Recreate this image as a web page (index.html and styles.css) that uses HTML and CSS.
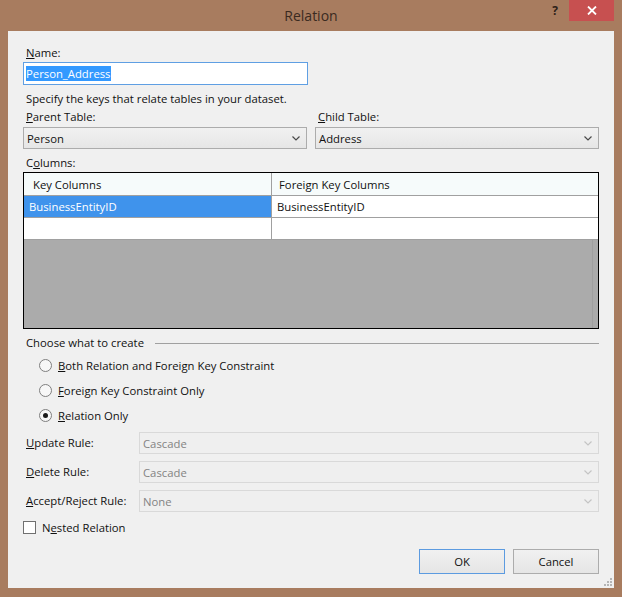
FILE: index.html
```html
<!DOCTYPE html>
<html>
<head>
<meta charset="utf-8">
<link rel="stylesheet" href="styles.css">
</head>
<body>
<div class="window">
  <div class="titlebar">
    <div></div>
    <div class="title">Relation</div>
    <div class="controls">
      <span class="help">?</span>
      <span class="close"><svg width="10" height="9" viewBox="0 0 10 9"><path d="M1 0.5 L9 8.5 M9 0.5 L1 8.5" stroke="#fff" stroke-width="1.8" fill="none"/></svg></span>
    </div>
  </div>
  <div class="client">
    <div class="label"><u>N</u>ame:</div>
    <div class="textbox"><span class="sel">Person_Address</span></div>
    <div class="label specify">Specify the keys that relate tables in your dataset.</div>
    <div class="tables">
      <div class="field">
        <div class="label"><u>P</u>arent Table:</div>
        <div class="combo"><span>Person</span><svg class="chev" width="8" height="5" viewBox="0 0 8 5"><path d="M0.5 0.5 L4 4 L7.5 0.5" stroke="#4a4a4a" stroke-width="1.2" fill="none"/></svg></div>
      </div>
      <div class="field">
        <div class="label"><u>C</u>hild Table:</div>
        <div class="combo"><span>Address</span><svg class="chev" width="8" height="5" viewBox="0 0 8 5"><path d="M0.5 0.5 L4 4 L7.5 0.5" stroke="#4a4a4a" stroke-width="1.2" fill="none"/></svg></div>
      </div>
    </div>
    <div class="label columns">C<u>o</u>lumns:</div>
    <div class="grid">
      <div class="row head"><div class="cell">Key Columns</div><div class="cell">Foreign Key Columns</div></div>
      <div class="row"><div class="cell selected">BusinessEntityID</div><div class="cell">BusinessEntityID</div></div>
      <div class="row"><div class="cell"></div><div class="cell"></div></div>
      <div class="empty"><div class="strip"></div></div>
    </div>
    <div class="group"><span>Choose what to create</span><div class="rule"></div></div>
    <div class="radios">
      <div class="radio"><span class="circle"></span><span><u>B</u>oth Relation and Foreign Key Constraint</span></div>
      <div class="radio"><span class="circle"></span><span><u>F</u>oreign Key Constraint Only</span></div>
      <div class="radio"><span class="circle checked"></span><span><u>R</u>elation Only</span></div>
    </div>
    <div class="rules">
      <div class="label"><u>U</u>pdate Rule:</div>
      <div class="combo disabled"><span>Cascade</span><svg class="chev" width="8" height="5" viewBox="0 0 8 5"><path d="M0.5 0.5 L4 4 L7.5 0.5" stroke="#c4c4c4" stroke-width="1.2" fill="none"/></svg></div>
      <div class="label"><u>D</u>elete Rule:</div>
      <div class="combo disabled"><span>Cascade</span><svg class="chev" width="8" height="5" viewBox="0 0 8 5"><path d="M0.5 0.5 L4 4 L7.5 0.5" stroke="#c4c4c4" stroke-width="1.2" fill="none"/></svg></div>
      <div class="label"><u>A</u>ccept/Reject Rule:</div>
      <div class="combo disabled"><span>None</span><svg class="chev" width="8" height="5" viewBox="0 0 8 5"><path d="M0.5 0.5 L4 4 L7.5 0.5" stroke="#c4c4c4" stroke-width="1.2" fill="none"/></svg></div>
    </div>
    <div class="check"><span class="box"></span><span>N<u>e</u>sted Relation</span></div>
    <div class="buttons">
      <div class="btn default">OK</div>
      <div class="btn">Cancel</div>
    </div>
    <svg class="grip" width="9" height="9" viewBox="0 0 9 9">
      <rect x="6" y="0" width="2" height="2" fill="#b5b5b5"/>
      <rect x="3" y="3" width="2" height="2" fill="#b5b5b5"/>
      <rect x="6" y="3" width="2" height="2" fill="#b5b5b5"/>
      <rect x="0" y="6" width="2" height="2" fill="#b5b5b5"/>
      <rect x="3" y="6" width="2" height="2" fill="#b5b5b5"/>
      <rect x="6" y="6" width="2" height="2" fill="#b5b5b5"/>
    </svg>
  </div>
</div>
</body>
</html>
```
FILE: styles.css
```css
html, body {
  margin: 0;
  padding: 0;
}
body {
  background: #a87c5f;
  font-family: "Open Sans", "Noto Sans", sans-serif;
  font-size: 11.3px;
  color: #111;
}
.window {
  width: 622px;
  height: 597px;
  background: #a87c5f;
  display: flex;
  flex-direction: column;
}
.titlebar {
  height: 31px;
  display: grid;
  grid-template-columns: 1fr auto 1fr;
  flex: none;
}
.title {
  font-size: 14px;
  line-height: 19px;
  padding-top: 6px;
  color: #3a2a1f;
}
.controls {
  justify-self: end;
  display: flex;
  align-items: flex-start;
  margin-right: 8px;
}
.help {
  font-weight: bold;
  font-size: 12px;
  line-height: 14px;
  margin-top: 4px;
  margin-right: 11px;
  color: #2e2118;
}
.close {
  width: 45px;
  height: 21px;
  background: #c75050;
  display: flex;
  align-items: center;
  justify-content: center;
}
.client {
  position: relative;
  margin: 0 8px 9px 8px;
  height: 557px;
  box-sizing: border-box;
  background: #f0f0f0;
  padding: 14px 15px 0 15px;
}
.label {
  line-height: 16px;
  padding-left: 3px;
  white-space: nowrap;
}
u {
  text-decoration-thickness: 1px;
  text-underline-offset: 1px;
}
.textbox {
  margin-top: 1px;
  width: 285px;
  height: 23px;
  box-sizing: border-box;
  border: 1px solid #5f9fe3;
  background: #fff;
  padding: 0 2px;
  display: flex;
  align-items: center;
}
.sel {
  background: #3399ff;
  color: #fff;
  line-height: 15px;
}
.specify {
  margin-top: 6px;
}
.tables {
  margin-top: 2px;
  display: grid;
  grid-template-columns: 1fr 1fr;
  column-gap: 8px;
}
.combo {
  height: 22px;
  box-sizing: border-box;
  border: 1px solid #acacac;
  background: linear-gradient(#f1f1f1, #e6e6e6);
  display: flex;
  align-items: center;
  justify-content: space-between;
  padding: 0 6px 0 3px;
}
.field .combo {
  margin-top: 2px;
}
.combo.disabled {
  border-color: #d9d9d9;
  background: #efefef;
  color: #838383;
}
.columns {
  margin-top: 6px;
}
.grid {
  margin-top: 1px;
  height: 157px;
  box-sizing: border-box;
  border: 1px solid #000;
  display: flex;
  flex-direction: column;
  background: #fff;
}
.row {
  display: grid;
  grid-template-columns: 248px 1fr;
  height: 22px;
  box-sizing: border-box;
  border-bottom: 1px solid #a0a0a0;
  flex: none;
}
.row.head {
  height: 23px;
  background: #f6fbfb;
}
.cell {
  padding-left: 5px;
  display: flex;
  align-items: center;
  white-space: nowrap;
}
.row .cell:first-child {
  border-right: 1px solid #a0a0a0;
}
.row.head .cell {
  padding-left: 7px;
}
.row.head .cell:first-child {
  padding-left: 9px;
}
.cell.selected {
  background: #3f93ec;
  color: #fff;
}
.empty {
  flex: 1;
  background: #ababab;
  display: flex;
  justify-content: flex-end;
}
.strip {
  width: 5px;
  border-left: 1px solid #9f9f9f;
}
.group {
  margin-top: 6px;
  display: flex;
  align-items: center;
  line-height: 16px;
  padding-left: 3px;
}
.rule {
  flex: 1;
  height: 1px;
  background: #a0a0a0;
  margin-left: 11px;
}
.radios {
  margin-top: 2px;
}
.radio {
  height: 25px;
  display: flex;
  align-items: center;
  padding-left: 16px;
  gap: 6px;
}
.circle {
  width: 13px;
  height: 13px;
  box-sizing: border-box;
  border: 1px solid #7f7f7f;
  border-radius: 50%;
  background: #f7f7f7;
  display: flex;
  align-items: center;
  justify-content: center;
}
.circle.checked::after {
  content: "";
  width: 5px;
  height: 5px;
  border-radius: 50%;
  background: #1a1a1a;
}
.rules {
  margin-top: 4px;
  display: grid;
  grid-template-columns: 116px 1fr;
  row-gap: 7px;
  align-items: center;
}
.check {
  margin-top: 7px;
  height: 16px;
  display: flex;
  align-items: center;
  gap: 6px;
}
.box {
  width: 13px;
  height: 13px;
  box-sizing: border-box;
  border: 1px solid #707070;
  background: #fff;
}
.buttons {
  margin-top: 14px;
  display: flex;
  justify-content: flex-end;
  gap: 8px;
}
.btn {
  width: 86px;
  height: 25px;
  box-sizing: border-box;
  border: 1px solid #acacac;
  background: linear-gradient(#f1f1f1, #e5e5e5);
  display: flex;
  align-items: center;
  justify-content: center;
}
.btn.default {
  border-color: #5c9be0;
}
.grip {
  position: absolute;
  right: 1px;
  bottom: 1px;
}
```
